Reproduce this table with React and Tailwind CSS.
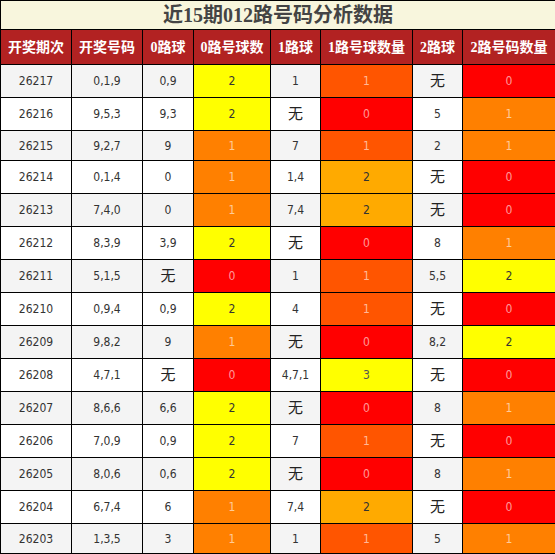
const rows = [
    ["26217", "0,1,9", "0,9", 2, "1", 1, "无", 0],
    ["26216", "9,5,3", "9,3", 2, "无", 0, "5", 1],
    ["26215", "9,2,7", "9", 1, "7", 1, "2", 1],
    ["26214", "0,1,4", "0", 1, "1,4", 2, "无", 0],
    ["26213", "7,4,0", "0", 1, "7,4", 2, "无", 0],
    ["26212", "8,3,9", "3,9", 2, "无", 0, "8", 1],
    ["26211", "5,1,5", "无", 0, "1", 1, "5,5", 2],
    ["26210", "0,9,4", "0,9", 2, "4", 1, "无", 0],
    ["26209", "9,8,2", "9", 1, "无", 0, "8,2", 2],
    ["26208", "4,7,1", "无", 0, "4,7,1", 3, "无", 0],
    ["26207", "8,6,6", "6,6", 2, "无", 0, "8", 1],
    ["26206", "7,0,9", "0,9", 2, "7", 1, "无", 0],
    ["26205", "8,0,6", "0,6", 2, "无", 0, "8", 1],
    ["26204", "6,7,4", "6", 1, "7,4", 2, "无", 0],
    ["26203", "1,3,5", "3", 1, "1", 1, "5", 1],
];

const headers = ["开奖期次", "开奖号码", "0路球", "0路号球数", "1路球", "1路号球数量", "2路球", "2路号码数量"];

// colour for count columns 0路 / 2路
const countColor = {
    0: "bg-[#ff0000] text-white/60",
    1: "bg-[#ff8000] text-white/60",
    2: "bg-[#ffff00] text-[#333]",
    3: "bg-[#ffff00] text-[#555]",
};

// 1路 column uses a different scale
const oneColor = {
    0: "bg-[#ff0000] text-white/60",
    1: "bg-[#ff5500] text-white/60",
    2: "bg-[#ffaa00] text-[#333]",
    3: "bg-[#ffff00] text-[#555]",
};

function Cell({ children, className = "" }) {
    const cjk = children === "无";
    return (
        <td className={`border border-black text-center p-0 ${cjk ? "text-[15px] text-[#222]" : "text-[12px]"} ${className}`}>
            {children}
        </td>
    );
}

export default function App() {
    return (
        <div className="w-[555px] bg-white font-['DejaVu_Sans_Condensed','DejaVu_Sans','Noto_Sans_CJK_SC',sans-serif] text-[#333]">
            <table className="w-[555px] table-fixed border-collapse">
                <colgroup>
                    <col className="w-[71px]" />
                    <col className="w-[71px]" />
                    <col className="w-[51px]" />
                    <col className="w-[77px]" />
                    <col className="w-[50px]" />
                    <col className="w-[92px]" />
                    <col className="w-[50px]" />
                    <col className="w-[93px]" />
                </colgroup>
                <tbody>
                    <tr className="h-[29px]">
                        <td
                            colSpan={8}
                            className="border border-black bg-[#f8f6dd] text-center p-0 text-[20px] font-bold text-[#444] font-['Liberation_Serif','Noto_Sans_CJK_SC',serif] leading-[27px]"
                        >
                            近15期012路号码分析数据
                        </td>
                    </tr>
                    <tr className="h-[35px]">
                        {headers.map((h) => (
                            <td
                                key={h}
                                className="border border-black bg-[#b22222] text-white text-center p-0 text-[14px] font-bold font-['Liberation_Serif','Noto_Sans_CJK_SC',serif] whitespace-nowrap"
                            >
                                {h}
                            </td>
                        ))}
                    </tr>
                    {rows.map((r, i) => {
                        const tall = r.includes("无");
                        return (
                            <tr
                                key={r[0]}
                                className={`${tall ? "h-[33px]" : "h-[30px]"} ${i % 2 === 0 ? "bg-[#f4f4f4]" : "bg-white"}`}
                            >
                                <Cell>{r[0]}</Cell>
                                <Cell>{r[1]}</Cell>
                                <Cell>{r[2]}</Cell>
                                <Cell className={countColor[r[3]]}>{r[3]}</Cell>
                                <Cell>{r[4]}</Cell>
                                <Cell className={oneColor[r[5]]}>{r[5]}</Cell>
                                <Cell>{r[6]}</Cell>
                                <Cell className={countColor[r[7]]}>{r[7]}</Cell>
                            </tr>
                        );
                    })}
                </tbody>
            </table>
        </div>
    );
}
